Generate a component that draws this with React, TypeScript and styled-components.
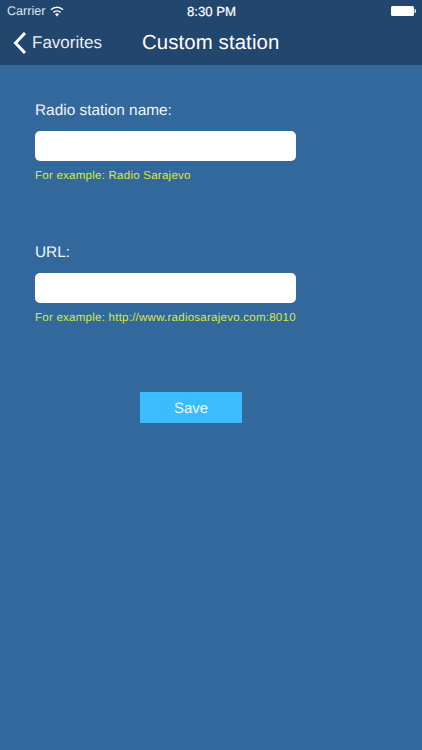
import React from "react";
import styled, { createGlobalStyle } from "styled-components";

const Global = createGlobalStyle`
  html, body { margin: 0; padding: 0; background: #33689c; }
  * { box-sizing: border-box; }
`;

const Screen = styled.div`
  width: 422px;
  height: 750px;
  background: #33689c;
  font-family: "Liberation Sans", Arial, sans-serif;
  text-rendering: geometricPrecision;
  color: #fff;
  display: flex;
  flex-direction: column;
  overflow: hidden;
`;

const Header = styled.header`
  height: 65px;
  background: #23466e;
  display: flex;
  flex-direction: column;
`;

const StatusBar = styled.div`
  height: 22px;
  padding: 0 6px 0 7px;
  display: grid;
  grid-template-columns: 1fr auto 1fr;
  align-items: center;
  font-size: 12.6px;
`;

const StatusLeft = styled.div`
  display: flex;
  align-items: center;
  gap: 5px;
  color: #dfe6ee;
`;

const Clock = styled.div`
  font-size: 13.2px;
  -webkit-text-stroke: 0.2px #fff;
`;

const StatusRight = styled.div`
  display: flex;
  justify-content: flex-end;
`;

const NavBar = styled.nav`
  flex: 1;
  display: flex;
  align-items: center;
  padding: 0 0 1px 13px;
`;

const BackLink = styled.div`
  display: flex;
  align-items: center;
  gap: 5px;
  width: 129px;
  font-size: 17px;
  color: #e8edf3;
`;

const Title = styled.h1`
  margin: 0;
  font-size: 20.4px;
  font-weight: 400;
  letter-spacing: 0.1px;
`;

const Form = styled.main`
  padding: 36px 0 0 35px;
  display: flex;
  flex-direction: column;
`;

const Field = styled.section`
  width: 290px;
  height: 141.5px;
  display: flex;
  flex-direction: column;
`;

const Label = styled.label`
  font-size: 15.4px;
  line-height: 20px;
  color: #f1f5fa;
`;

const Input = styled.input`
  width: 261px;
  height: 30px;
  margin-top: 10px;
  border: 0;
  border-radius: 5px;
  background: #fff;
  flex: none;
`;

const Hint = styled.div`
  margin-top: 8px;
  font-size: 11.5px;
  line-height: 14px;
  letter-spacing: 0.25px;
  color: #dbe83c;
  white-space: nowrap;
`;

const SaveRow = styled.div`
  margin-top: 8px;
  padding-left: 105px;
`;

const SaveButton = styled.button`
  display: block;
  width: 102px;
  height: 31px;
  border: 0;
  background: #3bbcff;
  color: #eaf7ff;
  font: 400 15px "Liberation Sans", Arial, sans-serif;
  text-rendering: geometricPrecision;
  padding: 1px 0 0;
`;

const Wifi = () => (
  <svg width="14" height="11" viewBox="0 0 14 11" fill="none">
    <path d="M7 10.5 9 8.2a2.9 2.9 0 0 0-4 0Z" fill="#fff" />
    <path d="M3.4 6.4a5.2 5.2 0 0 1 7.2 0" stroke="#fff" strokeWidth="1.5" />
    <path d="M1 3.8a8.6 8.6 0 0 1 12 0" stroke="#fff" strokeWidth="1.5" />
  </svg>
);

const Battery = () => (
  <svg width="25" height="10" viewBox="0 0 25 10">
    <rect x="0" y="0" width="23" height="10" rx="1.5" fill="#fff" />
    <rect x="23.5" y="3" width="1.5" height="4" rx="0.7" fill="#dfe6ee" />
  </svg>
);

const Chevron = () => (
  <svg width="14" height="24" viewBox="0 0 14 24" fill="none">
    <path d="M12 2 2.5 12l9.5 10" stroke="#fff" strokeWidth="3" />
  </svg>
);

export default function App() {
  return (
    <Screen>
      <Global />
      <Header>
        <StatusBar>
          <StatusLeft>
            Carrier <Wifi />
          </StatusLeft>
          <Clock>8:30 PM</Clock>
          <StatusRight>
            <Battery />
          </StatusRight>
        </StatusBar>
        <NavBar>
          <BackLink>
            <Chevron /> Favorites
          </BackLink>
          <Title>Custom station</Title>
        </NavBar>
      </Header>
      <Form>
        <Field>
          <Label>Radio station name:</Label>
          <Input />
          <Hint>For example: Radio Sarajevo</Hint>
        </Field>
        <Field>
          <Label>URL:</Label>
          <Input />
          <Hint>For example: http://www.radiosarajevo.com:8010</Hint>
        </Field>
        <SaveRow>
          <SaveButton>Save</SaveButton>
        </SaveRow>
      </Form>
    </Screen>
  );
}
